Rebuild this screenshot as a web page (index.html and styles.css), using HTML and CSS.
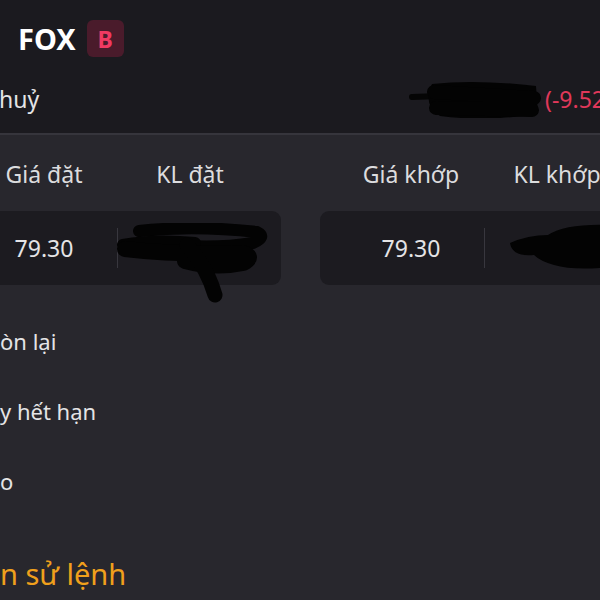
FILE: index.html
```html
<!DOCTYPE html>
<html lang="vi">
<head>
  <meta charset="UTF-8" />
  <title>FOX - Chi tiết lệnh</title>
  <link rel="stylesheet" href="styles.css">
</head>
<body>

<div class="top">
  <div class="title">
    <span class="ticker">FOX</span>
    <span class="side">B</span>
  </div>
  <div class="status">
    <span class="status-text">huỷ</span>
    <span class="change">
      <svg class="scribble s1" width="140" height="40" viewBox="0 0 140 40">
        <path d="M6 17 L34 16" stroke="#050505" stroke-width="6" stroke-linecap="round" fill="none"/>
        <path d="M26 4 Q70 -1 130 6 L132 34 Q80 42 34 36 Q16 24 26 4 Z" fill="#030303"/>
        <path d="M28 12 L128 18 M30 28 L126 30" stroke="#030303" stroke-width="14" stroke-linecap="round"/>
      </svg>
      <span class="pct">(-9.52%)</span>
    </span>
  </div>
</div>

<div class="main">
  <div class="groups">
    <div class="group">
      <div class="heads">
        <span class="h1">Giá đặt</span>
        <span class="h2">KL đặt</span>
      </div>
      <div class="box">
        <span class="price">79.30</span>
        <span class="qty"></span>
        <svg class="scribble s2" width="160" height="80" viewBox="0 0 160 80">
          <path d="M24 8 Q80 2 142 9 Q152 14 138 20 Q100 26 60 22" stroke="#030303" stroke-width="12" stroke-linecap="round" fill="none"/>
          <path d="M8 22 Q40 16 80 20" stroke="#030303" stroke-width="12" stroke-linecap="round" fill="none"/>
          <path d="M10 26 Q60 32 128 30 Q140 34 128 40 Q100 46 70 38" stroke="#030303" stroke-width="16" stroke-linecap="round" fill="none"/>
          <path d="M72 22 Q92 44 100 72" stroke="#030303" stroke-width="15" stroke-linecap="round" fill="none"/>
        </svg>
      </div>
    </div>
    <div class="group">
      <div class="heads">
        <span class="h1">Giá khớp</span>
        <span class="h2">KL khớp</span>
      </div>
      <div class="box">
        <span class="price">79.30</span>
        <span class="qty"></span>
        <svg class="scribble s3" width="110" height="50" viewBox="0 0 110 50">
          <path d="M8 20 Q26 12 46 12 Q64 0 110 2 L110 44 Q72 48 52 42 Q38 38 32 32 Q10 34 8 20 Z" fill="#030303"/>
        </svg>
      </div>
    </div>
  </div>

  <div class="row">òn lại</div>
  <div class="row">y hết hạn</div>
  <div class="row">o</div>
  <div class="link">n sử lệnh</div>
</div>

</body>
</html>
```

FILE: styles.css
```css
body { margin: 0; background: #28272d; font-family: "Noto Sans", "Open Sans", sans-serif; color: #e4e4e6; overflow: hidden; }
.top { background: #1b1a1f; height: 133px; border-bottom: 2px solid #36353c; }
.title { display: flex; align-items: center; gap: 11px; padding: 20px 0 0 18px; height: 37px; }
.ticker { font-size: 29px; font-weight: bold; color: #fff; }
.side { width: 37px; height: 37px; border-radius: 6px; background: #4a1b2b; color: #f03a62; font-size: 23px; font-weight: bold; display: flex; align-items: center; justify-content: center; }
.status { display: flex; justify-content: space-between; align-items: center; margin-top: 23px; height: 38px; }
.status-text { font-size: 23px; margin-left: -1px; }
.change { position: relative; display: flex; align-items: center; width: 196px; height: 38px; overflow: hidden; white-space: nowrap; justify-content: flex-end; }
.pct { color: #e0385a; font-size: 23px; margin-right: -31px; }
.scribble { position: absolute; }
.s1 { left: 2px; top: 0; }

.groups { display: flex; gap: 39px; margin-left: -47px; padding-top: 24px; }
.group { width: 328px; flex-shrink: 0; }
.heads { display: flex; height: 30px; line-height: 30px; font-size: 23px; color: #dcdcde; white-space: nowrap; }
.h1 { width: 146px; padding-left: 18px; text-align: center; }
.h2 { width: 146px; text-align: center; }
.box { position: relative; display: flex; align-items: center; margin-top: 22px; height: 74px; background: #1c1b20; border-radius: 9px; }
.price { width: 146px; padding-left: 18px; text-align: center; font-size: 23px; border-right: 1px solid #38373e; line-height: 40px; }
.qty { flex: 1; }
.s2 { left: 162px; top: 12px; }
.s3 { left: 182px; top: 12px; }

.row { font-size: 22px; height: 70px; line-height: 70px; white-space: nowrap; }
.groups + .row { margin-top: 21px; }
.link { color: #f0a01c; font-size: 29px; margin-top: 38px; line-height: 40px; }
```
